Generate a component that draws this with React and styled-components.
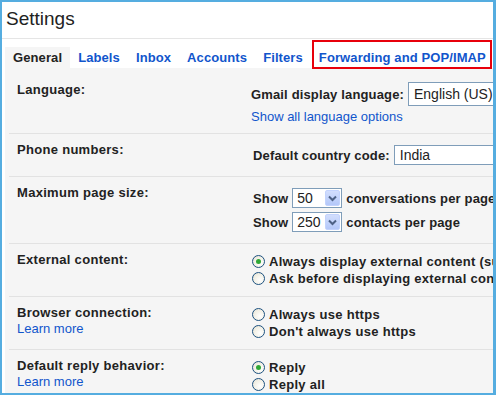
import React from "react";
import styled, { createGlobalStyle } from "styled-components";

const GlobalStyle = createGlobalStyle`
  body {
    margin: 0;
    background: #fff;
    font-family: "Liberation Sans", Arial, sans-serif;
  }
`;

const Frame = styled.div`
  width: 496px;
  height: 395px;
  box-sizing: border-box;
  border: 2px solid #55ade0;
  border-right-width: 3px;
  background: #fff;
  overflow: hidden;
  white-space: nowrap;
  color: #222;
`;

const Header = styled.div`
  height: 37px;
  box-sizing: border-box;
  padding: 5px 0 0 4px;
  border-bottom: 1px solid #e5e5e5;
`;

const Title = styled.h1`
  margin: 0;
  font-size: 19px;
  font-weight: normal;
  line-height: 24px;
  color: #222;
`;

const Tabs = styled.div`
  display: flex;
  padding: 8px 0 0 3px;
`;

const Tab = styled.div`
  position: relative;
  height: 21px;
  line-height: 22px;
  padding: 0 8px;
  font-size: 13px;
  font-weight: bold;
  letter-spacing: 0.1px;
  color: ${(p) => (p.$active ? "#222" : "#15c")};
  background: ${(p) => (p.$active ? "#f5f5f5" : "transparent")};

  ${(p) =>
    p.$marked &&
    `
    &::after {
      content: "";
      position: absolute;
      top: -7px;
      bottom: -1px;
      left: 1px;
      right: 2px;
      border: 2px solid #e8000b;
    }
  `}
`;

const Panel = styled.div`
  margin-left: 3px;
  padding-top: 6px;
  background: #f5f5f5;
  height: 100%;
`;

const Row = styled.div`
  display: grid;
  grid-template-columns: 242px 1fr;
  margin-left: 4px;
  padding: 8px 0;
  border-bottom: 1px solid #e2e2e2;
`;

const LabelCol = styled.div`
  padding-left: 8px;
  display: flex;
  flex-direction: column;
`;

const Label = styled.div`
  font-size: 13px;
  font-weight: bold;
  letter-spacing: 0.3px;
  line-height: 16px;
`;

const Link = styled.a`
  font-size: 13px;
  line-height: 16px;
  color: #15c;
  text-decoration: none;
  cursor: pointer;
`;

const Field = styled.div`
  display: flex;
  flex-direction: column;
  gap: ${(p) => p.$gap || 0}px;
  padding: ${(p) => p.$pad || "0"};
  min-width: 0;
`;

const Line = styled.div`
  display: flex;
  align-items: center;
  gap: 4px;
  font-size: 13px;
  font-weight: bold;
  letter-spacing: 0.15px;
`;

const TextBox = styled.div`
  box-sizing: border-box;
  height: ${(p) => p.$h}px;
  width: ${(p) => p.$w}px;
  flex: none;
  border: 1px solid #7f9db9;
  background: #fff;
  padding-left: 5px;
  font-size: 14px;
  font-weight: normal;
  letter-spacing: 0;
  line-height: ${(p) => p.$h - 2}px;
`;

const SelectBox = styled.div`
  box-sizing: border-box;
  display: flex;
  align-items: stretch;
  width: 50px;
  height: 20px;
  flex: none;
  border: 1px solid #7f9db9;
  background: #fff;
  padding: 1px;
  font-size: 14px;
  font-weight: normal;
  letter-spacing: 0;
`;

const SelectValue = styled.span`
  flex: 1;
  padding-left: 3px;
  line-height: 16px;
`;

const SelectButton = styled.span`
  width: 15px;
  display: flex;
  align-items: center;
  justify-content: center;
  border-radius: 2px;
  background: linear-gradient(#d2defd, #b4c8f9);
  border: 1px solid #c3d3fd;
  box-sizing: border-box;
`;

const RadioList = styled.div`
  display: flex;
  flex-direction: column;
  padding: 1px 0;
`;

const RadioLine = styled.label`
  display: flex;
  align-items: center;
  gap: 4px;
  height: 17px;
  font-size: 13px;
  font-weight: bold;
  letter-spacing: 0.3px;
  margin-left: 1px;
`;

const RadioDot = styled.span`
  box-sizing: border-box;
  width: 13px;
  height: 13px;
  flex: none;
  border-radius: 50%;
  border: 1px solid #1c5180;
  background: radial-gradient(circle at 65% 65%, #fff 0%, #f1efe4 60%, #dcd9cb 100%);
  display: flex;
  align-items: center;
  justify-content: center;

  &::after {
    content: "";
    width: 5px;
    height: 5px;
    border-radius: 50%;
    background: ${(p) => (p.$checked ? "#2fa836" : "transparent")};
  }
`;

const Chevron = () => (
  <svg width="9" height="7" viewBox="0 0 9 7">
    <path d="M1 1.5 L4.5 5 L8 1.5" fill="none" stroke="#4d6185" strokeWidth="2" />
  </svg>
);

const Select = ({ value }) => (
  <SelectBox>
    <SelectValue>{value}</SelectValue>
    <SelectButton>
      <Chevron />
    </SelectButton>
  </SelectBox>
);

const Radio = ({ checked, children }) => (
  <RadioLine>
    <RadioDot $checked={checked} />
    {children}
  </RadioLine>
);

const tabs = ["General", "Labels", "Inbox", "Accounts", "Filters", "Forwarding and POP/IMAP"];

export default function App() {
  return (
    <>
      <GlobalStyle />
      <Frame>
        <Header>
          <Title>Settings</Title>
        </Header>
        <Tabs>
          {tabs.map((t, i) => (
            <Tab key={t} $active={i === 0} $marked={i === tabs.length - 1}>
              {t}
            </Tab>
          ))}
        </Tabs>
        <Panel>
          <Row>
            <LabelCol>
              <Label>Language:</Label>
            </LabelCol>
            <Field $gap={3}>
              <Line>
                Gmail display language:
                <TextBox $h={24} $w={120}>English (US)</TextBox>
              </Line>
              <Link>Show all language options</Link>
            </Field>
          </Row>
          <Row>
            <LabelCol>
              <Label>Phone numbers:</Label>
            </LabelCol>
            <Field $pad="3px 0 3px 2px">
              <Line>
                Default country code:
                <TextBox $h={20} $w={200}>India</TextBox>
              </Line>
            </Field>
          </Row>
          <Row>
            <LabelCol>
              <Label>Maximum page size:</Label>
            </LabelCol>
            <Field $gap={4} $pad="3px 0 3px 2px">
              <Line>
                Show <Select value="50" /> conversations per page
              </Line>
              <Line>
                Show <Select value="250" /> contacts per page
              </Line>
            </Field>
          </Row>
          <Row>
            <LabelCol>
              <Label>External content:</Label>
            </LabelCol>
            <RadioList>
              <Radio checked>Always display external content (such as images) sent by trusted senders</Radio>
              <Radio>Ask before displaying external content</Radio>
            </RadioList>
          </Row>
          <Row>
            <LabelCol>
              <Label>Browser connection:</Label>
              <Link>Learn more</Link>
            </LabelCol>
            <RadioList>
              <Radio>Always use https</Radio>
              <Radio>Don't always use https</Radio>
            </RadioList>
          </Row>
          <Row>
            <LabelCol>
              <Label>Default reply behavior:</Label>
              <Link>Learn more</Link>
            </LabelCol>
            <RadioList>
              <Radio checked>Reply</Radio>
              <Radio>Reply all</Radio>
            </RadioList>
          </Row>
        </Panel>
      </Frame>
    </>
  );
}
